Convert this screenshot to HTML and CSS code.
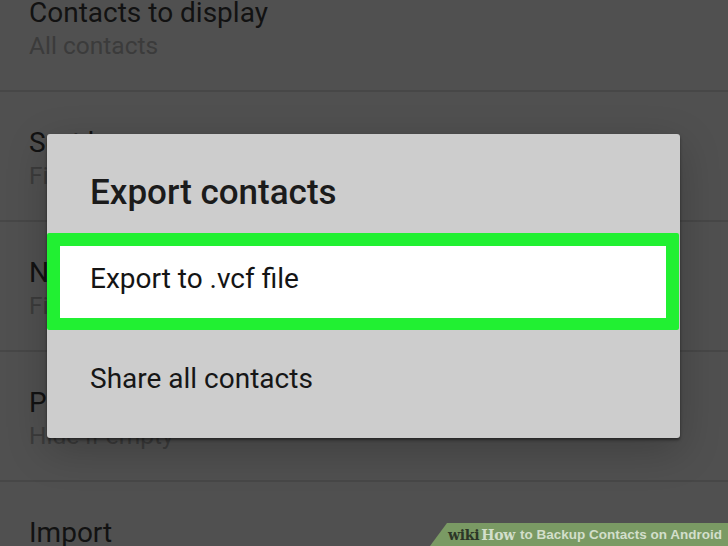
FILE: index.html
```html
<!DOCTYPE html>
<html>
<head>
<meta charset="utf-8">
<link rel="stylesheet" href="styles.css">
</head>
<body>
<div class="screen">
  <div class="settings">
    <div class="row"><div class="row-title">Contacts to display</div><div class="row-sub">All contacts</div></div>
    <div class="row"><div class="row-title">Sort by</div><div class="row-sub">First name</div></div>
    <div class="row"><div class="row-title">Name format</div><div class="row-sub">First name first</div></div>
    <div class="row"><div class="row-title">Phonetic name</div><div class="row-sub">Hide if empty</div></div>
    <div class="row"><div class="row-title">Import</div><div class="row-sub">Import contacts</div></div>
  </div>

  <div class="dialog">
    <div class="dialog-title">Export contacts</div>
    <div class="option option-highlight"><span class="option-text">Export to .vcf file</span></div>
    <div class="option option-plain"><span class="option-text share">Share all contacts</span></div>
  </div>

  <div class="watermark">
    <span class="wm-wiki">wiki</span><span class="wm-how">How</span><span class="wm-text">to Backup Contacts on Android</span>
  </div>
</div>
</body>
</html>
```

FILE: styles.css
```css
html, body {
  margin: 0;
  padding: 0;
  background: #505050;
}

.screen {
  position: relative;
  width: 728px;
  height: 546px;
  overflow: hidden;
  background: #505050;
  font-family: Roboto, "Liberation Sans", sans-serif;
}

.settings {
  margin-top: -38px;
  display: flex;
  flex-direction: column;
}

.row {
  box-sizing: border-box;
  height: 130px;
  padding: 36px 0 0 29px;
  border-bottom: 2px solid #474747;
}

.row-title {
  font-size: 28px;
  line-height: 30px;
  color: #121212;
}

.row-sub {
  font-size: 24.5px;
  line-height: 36px;
  color: #3b3b3b;
}

.dialog {
  position: absolute;
  left: 47px;
  top: 134px;
  width: 633px;
  height: 304px;
  background: #cdcdcd;
  border-radius: 3px;
  box-shadow: 0 2px 3px rgba(0, 0, 0, 0.45), 0 12px 40px rgba(0, 0, 0, 0.22);
  display: flex;
  flex-direction: column;
}

.dialog-title {
  padding: 39px 0 0 43px;
  height: 60px;
  font-size: 35px;
  line-height: 40px;
  font-weight: 500;
  color: #1b1b1b;
}

.option {
  box-sizing: border-box;
}

.option-highlight {
  margin-right: 1px;
  height: 97px;
  border: 13px solid #21f032;
  border-bottom-width: 12px;
  border-radius: 2px;
  background: #ffffff;
  padding: 18px 0 0 30px;
}

.option-text {
  display: block;
  font-size: 28px;
  line-height: 30px;
  color: #141414;
}

.option-plain {
  flex: 1;
  padding: 34px 0 0 43px;
}

.option-text.share {
  font-size: 28px;
  color: #161616;
}

.watermark {
  position: absolute;
  right: 0;
  bottom: 0;
  width: 298px;
  height: 23px;
  background: #7a9a64;
  clip-path: polygon(17px 0, 100% 0, 100% 100%, 0 100%);
  display: flex;
  align-items: center;
  padding-left: 18px;
  box-sizing: border-box;
  white-space: nowrap;
}

.wm-wiki,
.wm-how {
  font-family: "DejaVu Serif", "Liberation Serif", serif;
  font-weight: bold;
  font-size: 14px;
  letter-spacing: -0.3px;
}

.wm-wiki {
  color: #2c3627;
}

.wm-how {
  color: #d3dfcb;
  margin-left: 2px;
}

.wm-text {
  font-family: "Liberation Sans", Arial, sans-serif;
  font-weight: bold;
  font-size: 13.5px;
  color: #d3dfcb;
  margin-left: 5px;
}
```
